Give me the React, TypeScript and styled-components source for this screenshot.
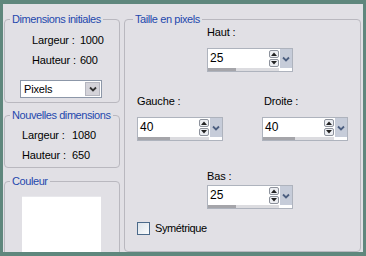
import React from "react";
import styled, { createGlobalStyle } from "styled-components";

const Global = createGlobalStyle`
  html, body { margin: 0; padding: 0; }
  body {
    width: 366px; height: 256px; overflow: hidden;
    background: #5f877d;
    font-family: "Liberation Sans", Arial, sans-serif;
    font-size: 11px; color: #000;
    letter-spacing: -0.15px;
  }
`;

const Frame = styled.div`
  width: 366px; height: 256px; box-sizing: border-box;
  padding: 4px 3px 4px 3px;
  background: #5f877d;
`;

const Panel = styled.div`
  height: 100%; box-sizing: border-box;
  background: #e1e0e5;
  display: flex; gap: 4px;
  padding: 9px 2px 0 1px;
  overflow: hidden;
`;

const LeftCol = styled.div`
  width: 116px; flex: none;
  display: flex; flex-direction: column;
`;

const RightCol = styled.div`
  flex: 1; display: flex; flex-direction: column;
`;

const Group = styled.fieldset<{ $mt?: number; $pb?: number; $grow?: boolean }>`
  margin: ${(p) => p.$mt ?? 0}px 0 0 0;
  padding: 0 0 ${(p) => p.$pb ?? 0}px 0;
  border: 1px solid #b9b8bf;
  border-radius: 4px;
  min-width: 0;
  ${(p) => (p.$grow ? "flex: 1;" : "")}
`;

const Caption = styled.legend<{ $ml?: number }>`
  margin-left: ${(p) => p.$ml ?? 5}px;
  padding: 0 2px;
  color: #1f48ad;
  font-size: 11px; line-height: 13px;
  letter-spacing: -0.42px;
  white-space: nowrap;
`;

const InfoGrid = styled.div<{ $ml: number; $mt: number; $col?: string }>`
  display: grid;
  grid-template-columns: ${(p) => p.$col ?? "auto auto"};
  justify-content: start;
  column-gap: 4px; row-gap: 7px;
  margin: ${(p) => p.$mt}px 0 0 ${(p) => p.$ml}px;
  line-height: 13px;
`;

const Label = styled.span``;

const Select = styled.div`
  margin: 13px 0 0 15px;
  width: 82px; height: 18px; box-sizing: border-box;
  border: 1px solid #8c97a8;
  background: #fff;
  display: flex; align-items: stretch;
`;

const SelectText = styled.span`
  flex: 1; padding-left: 3px; line-height: 16px; font-size: 11px;
`;

const SelectButton = styled.span`
  width: 15px; margin: 1px; box-sizing: border-box;
  background: #d4d3d9; border: 1px solid #b5b6bf;
  display: flex; align-items: center; justify-content: center;
`;

const Swatch = styled.div`
  margin: 8px 0 0 17px;
  width: 79px; height: 80px;
  background: #fff;
  border-top: 1px solid #e8e8ec;
`;

const SizeBody = styled.div`
  display: flex; flex-direction: column;
  padding: 0 12px 0 12px;
`;

const CenterBlock = styled.div<{ $mt: number }>`
  margin: ${(p) => p.$mt}px 0 0 70px;
  display: flex; flex-direction: column;
`;

const PairRow = styled.div<{ $mt: number }>`
  margin-top: ${(p) => p.$mt}px;
  display: flex; justify-content: space-between;
`;

const Field = styled.div`
  display: flex; flex-direction: column;
`;

const FieldLabel = styled.span<{ $ml?: number; $gap: number }>`
  line-height: 13px;
  margin-left: ${(p) => p.$ml ?? 0}px;
  margin-bottom: ${(p) => p.$gap}px;
`;

const SpinBox = styled.div`
  width: 86px; height: 24px; box-sizing: border-box;
  border: 1px solid #aeb3bd;
  background: #fff;
  display: flex; flex-direction: column;
`;

const SpinTop = styled.div`
  display: flex; height: 19px;
`;

const SpinValue = styled.span`
  flex: 1; padding-left: 2px;
  font-size: 12px; line-height: 19px; letter-spacing: 0;
`;

const Arrows = styled.span`
  width: 10px; margin: 1px 0;
  display: flex; flex-direction: column; gap: 1px;
`;

const ArrowBtn = styled.span`
  flex: 1; box-sizing: border-box;
  border: 1px solid #8d929c; border-radius: 2px;
  background: #eceef2;
  display: flex; align-items: center; justify-content: center;
`;

const DropBtn = styled.span`
  width: 12px; margin: 0 0 0 1px;
  background: #c6ccd9;
  display: flex; align-items: center; justify-content: center;
`;

const Track = styled.div`
  height: 3px; background: #dcdce0;
  margin-right: 13px;
  display: flex;
`;

const TrackFill = styled.div`
  background: #a5a5aa; height: 100%;
`;

const CheckRow = styled.label`
  margin-top: 13px;
  display: flex; align-items: center; gap: 5px;
  line-height: 13px;
  letter-spacing: -0.4px;
`;

const CheckBox = styled.span`
  width: 13px; height: 13px; box-sizing: border-box;
  border: 1px solid #4b6a8a;
  background: linear-gradient(135deg, #dce3ea, #fafcfd);
`;

const Chevron = ({ color }: { color: string }) => (
  <svg width="8" height="6" viewBox="0 0 8 6">
    <path d="M1 1.5 L4 4.5 L7 1.5" stroke={color} strokeWidth="1.8" fill="none" />
  </svg>
);

const Tri = ({ up }: { up?: boolean }) => (
  <svg width="6" height="4" viewBox="0 0 6 4">
    <path d={up ? "M0 4 L3 0.5 L6 4 Z" : "M0 0 L3 3.5 L6 0 Z"} fill="#222" />
  </svg>
);

const Spin = ({ value, fill }: { value: string; fill: number }) => (
  <SpinBox>
    <SpinTop>
      <SpinValue>{value}</SpinValue>
      <Arrows>
        <ArrowBtn><Tri up /></ArrowBtn>
        <ArrowBtn><Tri /></ArrowBtn>
      </Arrows>
      <DropBtn><Chevron color="#4c5f80" /></DropBtn>
    </SpinTop>
    <Track>
      <TrackFill style={{ width: `${fill}px` }} />
    </Track>
  </SpinBox>
);

export default function App() {
  return (
    <>
      <Global />
      <Frame>
        <Panel>
          <LeftCol>
            <Group $pb={4}>
              <Caption>Dimensions initiales</Caption>
              <InfoGrid $ml={27} $mt={8}>
                <Label>Largeur :</Label><span>1000</span>
                <Label>Hauteur :</Label><span>600</span>
              </InfoGrid>
              <Select>
                <SelectText>Pixels</SelectText>
                <SelectButton><Chevron color="#333" /></SelectButton>
              </Select>
            </Group>
            <Group $mt={6} $pb={5}>
              <Caption>Nouvelles dimensions</Caption>
              <InfoGrid $ml={17} $mt={7} $col="46px auto">
                <Label>Largeur :</Label><span>1080</span>
                <Label>Hauteur :</Label><span>650</span>
              </InfoGrid>
            </Group>
            <Group $mt={7} $grow>
              <Caption>Couleur</Caption>
              <Swatch />
            </Group>
          </LeftCol>
          <RightCol>
            <Group $grow>
              <Caption $ml={8}>Taille en pixels</Caption>
              <SizeBody>
                <CenterBlock $mt={0}>
                  <Field>
                    <FieldLabel $gap={9}>Haut :</FieldLabel>
                    <Spin value="25" fill={28} />
                  </Field>
                </CenterBlock>
                <PairRow $mt={23}>
                  <Field>
                    <FieldLabel $gap={9}>Gauche :</FieldLabel>
                    <Spin value="40" fill={32} />
                  </Field>
                  <Field>
                    <FieldLabel $gap={9} $ml={2}>Droite :</FieldLabel>
                    <Spin value="40" fill={32} />
                  </Field>
                </PairRow>
                <CenterBlock $mt={29}>
                  <Field>
                    <FieldLabel $gap={2}>Bas :</FieldLabel>
                    <Spin value="25" fill={28} />
                  </Field>
                </CenterBlock>
                <CheckRow>
                  <CheckBox />
                  <span>Symétrique</span>
                </CheckRow>
              </SizeBody>
            </Group>
          </RightCol>
        </Panel>
      </Frame>
    </>
  );
}
